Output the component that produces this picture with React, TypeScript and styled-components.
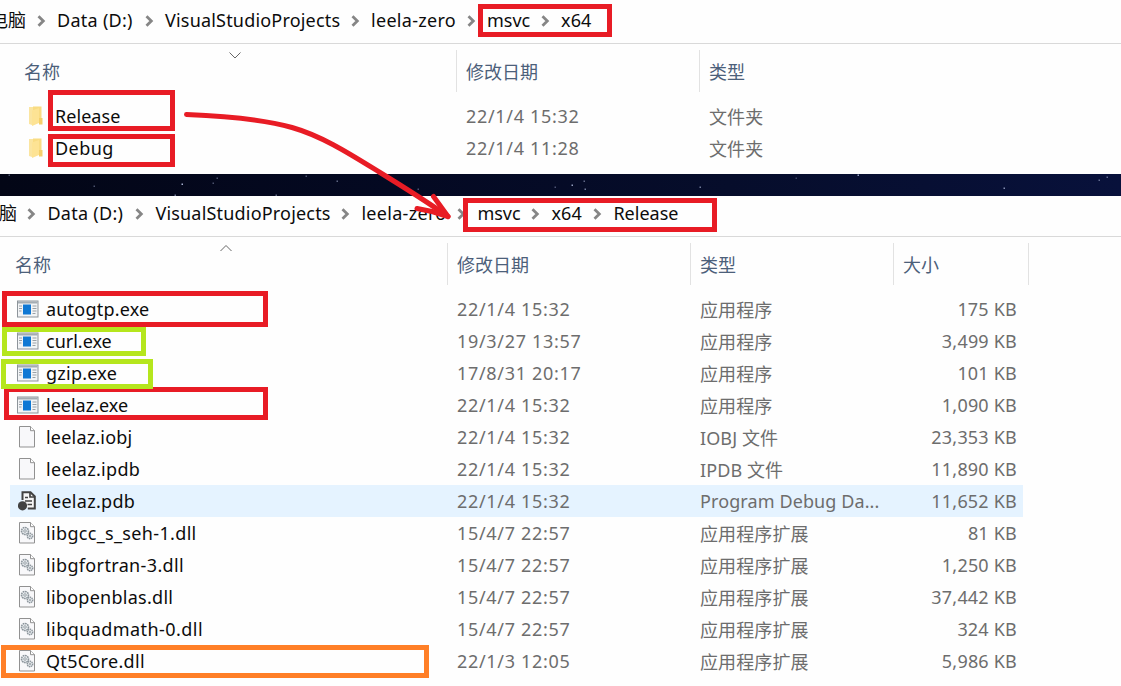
import React from "react";
import styled, { createGlobalStyle } from "styled-components";

const GlobalStyle = createGlobalStyle`
  * { box-sizing: border-box; }
  body {
    margin: 0;
    background: #fff;
    font-family: "Noto Sans", "Noto Sans CJK SC", sans-serif;
    font-size: 18px;
    overflow: hidden;
  }
`;

const Page = styled.main`
  position: relative;
  width: 1121px;
  height: 686px;
  overflow: hidden;
  background: #fefefe;
`;

const Explorer = styled.section<{ $height: number }>`
  display: flex;
  flex-direction: column;
  height: ${(p) => p.$height}px;
  overflow: hidden;
`;

const AddressBar = styled.nav<{ $height: number; $shift: number }>`
  display: flex;
  flex: none;
  align-items: flex-end;
  height: ${(p) => p.$height}px;
  border-bottom: 1px solid #d9d9d9;
  padding-bottom: 8px;
  & > :first-child {
    margin-left: ${(p) => p.$shift}px;
  }
`;

const Crumb = styled.span<{ $width: number; $spacing?: number }>`
  flex: none;
  width: ${(p) => p.$width}px;
  height: 30px;
  line-height: 30px;
  white-space: nowrap;
  color: #0c0c0c;
  letter-spacing: ${(p) => p.$spacing ?? 0}px;
`;

const Separator = styled.span`
  display: flex;
  flex: none;
  align-items: center;
  justify-content: center;
  width: 31px;
  height: 30px;
  padding-top: 1px;
`;

const HeaderRow = styled.div<{ $left: number }>`
  display: flex;
  flex: none;
  height: 56px;
  padding: 6px 0 8px ${(p) => p.$left}px;
`;

const HeaderCell = styled.div<{ $width: number; $last?: boolean }>`
  position: relative;
  flex: none;
  width: ${(p) => p.$width}px;
  height: 42px;
  padding-left: 9px;
  line-height: 44px;
  color: #4c607a;
  border-right: ${(p) => (p.$last ? "0" : "1px solid #e2e2e2")};
`;

const SortMark = styled.span`
  position: absolute;
  top: 0;
  left: 213px;
  display: flex;
`;

const Row = styled.div<{ $left: number; $selected?: boolean }>`
  display: flex;
  flex: none;
  align-items: center;
  width: 1013px;
  height: 32px;
  margin-left: ${(p) => p.$left}px;
  background: ${(p) => (p.$selected ? "#e5f3ff" : "transparent")};
`;

const NameCell = styled.div<{ $spacing?: number }>`
  display: flex;
  align-items: center;
  flex: none;
  width: 447px;
  padding-left: 7px;
  color: #0c0c0c;
  white-space: nowrap;
  letter-spacing: ${(p) => p.$spacing ?? 0}px;
`;

const IconSlot = styled.span<{ $inset: number }>`
  display: flex;
  flex: none;
  width: 29px;
  padding-left: ${(p) => p.$inset}px;
`;

const DateCell = styled.div`
  flex: none;
  width: 243px;
  color: #6d6d6d;
  letter-spacing: 0.69px;
`;

const TypeCell = styled.div`
  flex: none;
  width: 200px;
  padding-bottom: 1px;
  color: #6d6d6d;
  white-space: nowrap;
  letter-spacing: 0.1px;
`;

const SizeCell = styled.div`
  flex: none;
  width: 117px;
  color: #6d6d6d;
  text-align: right;
  letter-spacing: 0.2px;
`;

const Desktop = styled.div`
  height: 22px;
  background: linear-gradient(90deg, #030616 0%, #040922 35%, #060d2b 65%, #08113b 100%);
`;

const Annotations = styled.svg`
  position: absolute;
  inset: 0;
  pointer-events: none;
`;

const Mark = styled.div<{ $x: number; $y: number; $w: number; $h: number; $color: string }>`
  position: absolute;
  left: ${(p) => p.$x}px;
  top: ${(p) => p.$y}px;
  width: ${(p) => p.$w}px;
  height: ${(p) => p.$h}px;
  border: 5px solid ${(p) => p.$color};
`;

const Chevron = () => (
  <Separator>
    <svg width="9" height="12" viewBox="0 0 9 12">
      <path d="M1.5 1.3 6.3 6 1.5 10.7" fill="none" stroke="#868686" strokeWidth="2.8" />
    </svg>
  </Separator>
);

const FolderIcon = () => (
  <svg width="16" height="22" viewBox="0 0 16 22">
    <path d="M1 2h5v15l-2 3-3-1z" fill="#fbe5a0" />
    <path d="M5 1.500h8.500V14H5z" fill="#f9dc83" />
    <path d="M4 5.500 11 3v15l-7 3z" fill="#fde394" />
    <path d="M11 13h3.500v6.500H11z" fill="#f5d06b" />
  </svg>
);

const ExeIcon = () => (
  <svg width="22" height="18" viewBox="0 0 22 18">
    <rect x=".5" y="1" width="20.5" height="16" fill="#f2f4f6" stroke="#8d949a" />
    <path d="M1 2.5h19.5" stroke="#a4acb3" strokeWidth="2" />
    <path d="M2 6h3M2 8.5h3M2 11h2.500M15.500 6h4M15.500 8.500h4M15.500 11h4M15.500 13.500h3" stroke="#9aa0a6" />
    <rect x="6" y="4.500" width="8" height="10" fill="#0f78d4" />
  </svg>
);

const PageShape = () => (
  <>
    <path d="M1.500.5h11l4 4v16.500h-15z" fill="#f8f8fa" stroke="#919191" />
    <path d="M12.500.5v4.200h4" fill="#fff" stroke="#919191" />
  </>
);

const FileIcon = () => (
  <svg width="18" height="22" viewBox="0 0 18 22">
    <PageShape />
  </svg>
);

const DllIcon = () => (
  <svg width="18" height="22" viewBox="0 0 18 22">
    <PageShape />
    <g fill="#e9edf0" stroke="#8b949b">
      <circle cx="7" cy="9" r="3.500" strokeWidth="1.600" strokeDasharray="1.700 .6" />
      <circle cx="7" cy="9" r="1.300" strokeWidth=".8" />
      <circle cx="12" cy="14" r="2.700" strokeWidth="1.500" strokeDasharray="1.400 .6" />
      <circle cx="12" cy="14" r=".8" strokeWidth=".8" />
    </g>
  </svg>
);

const PdbIcon = () => (
  <svg width="19" height="20" viewBox="0 0 19 20">
    <path d="M4.500 9V1.200h8l4.300 4.300v12h-7" fill="#f6f6f6" stroke="#424242" strokeWidth="2" />
    <path d="M12 1v5h5M7 6.500h3M7 10h7M9.500 13.500H14" fill="none" stroke="#424242" strokeWidth="1.700" />
    <circle cx="4.500" cy="14.800" r="4.600" fill="#424242" />
  </svg>
);

const icons = {
  folder: { Icon: FolderIcon, inset: 2 },
  exe: { Icon: ExeIcon, inset: 0 },
  file: { Icon: FileIcon, inset: 1 },
  dll: { Icon: DllIcon, inset: 1 },
  pdb: { Icon: PdbIcon, inset: 0.5 },
};

type Entry = {
  icon: keyof typeof icons;
  name: string;
  date: string;
  type: string;
  size?: string;
  spacing?: number;
  selected?: boolean;
};

const folders: Entry[] = [
  { icon: "folder", name: "Release", date: "22/1/4 15:32", type: "文件夹", spacing: 0.05 },
  { icon: "folder", name: "Debug", date: "22/1/4 11:28", type: "文件夹", spacing: 0.45 },
];

const files: Entry[] = [
  { icon: "exe", name: "autogtp.exe", spacing: 0.2, date: "22/1/4 15:32", type: "应用程序", size: "175 KB" },
  { icon: "exe", name: "curl.exe", date: "19/3/27 13:57", type: "应用程序", size: "3,499 KB" },
  { icon: "exe", name: "gzip.exe", spacing: 0.25, date: "17/8/31 20:17", type: "应用程序", size: "101 KB" },
  { icon: "exe", name: "leelaz.exe", date: "22/1/4 15:32", type: "应用程序", size: "1,090 KB" },
  { icon: "file", name: "leelaz.iobj", spacing: 0.2, date: "22/1/4 15:32", type: "IOBJ 文件", size: "23,353 KB" },
  { icon: "file", name: "leelaz.ipdb", spacing: 0.3, date: "22/1/4 15:32", type: "IPDB 文件", size: "11,890 KB" },
  { icon: "pdb", name: "leelaz.pdb", spacing: 0.3, date: "22/1/4 15:32", type: "Program Debug Da...", size: "11,652 KB", selected: true },
  { icon: "dll", name: "libgcc_s_seh-1.dll", spacing: 0.34, date: "15/4/7 22:57", type: "应用程序扩展", size: "81 KB" },
  { icon: "dll", name: "libgfortran-3.dll", spacing: 0.35, date: "15/4/7 22:57", type: "应用程序扩展", size: "1,250 KB" },
  { icon: "dll", name: "libopenblas.dll", spacing: 0.27, date: "15/4/7 22:57", type: "应用程序扩展", size: "37,442 KB" },
  { icon: "dll", name: "libquadmath-0.dll", spacing: 0.44, date: "15/4/7 22:57", type: "应用程序扩展", size: "324 KB" },
  { icon: "dll", name: "Qt5Core.dll", spacing: 0.3, date: "22/1/3 12:05", type: "应用程序扩展", size: "5,986 KB" },
];

const crumbs = [
  { text: "Data (D:)", width: 77, spacing: 0.28 },
  { text: "VisualStudioProjects", width: 175, spacing: 0.19 },
  { text: "leela-zero", width: 85, spacing: 0.3 },
  { text: "msvc", width: 43, spacing: 0 },
  { text: "x64", width: 31, spacing: 0.15 },
  { text: "Release", width: 66, spacing: 0 },
];

type AddressProps = { height: number; shift: number; root: string; rootWidth: number; count: number };

const Address = ({ height, shift, root, rootWidth, count }: AddressProps) => (
  <AddressBar $height={height} $shift={shift}>
    <Crumb $width={rootWidth}>{root}</Crumb>
    {crumbs.slice(0, count).map((c) => (
      <React.Fragment key={c.text}>
        <Chevron />
        <Crumb $width={c.width} $spacing={c.spacing}>{c.text}</Crumb>
      </React.Fragment>
    ))}
  </AddressBar>
);

const FileRow = ({ entry, left }: { entry: Entry; left: number }) => {
  const { Icon, inset } = icons[entry.icon];
  return (
    <Row $left={left} $selected={entry.selected}>
      <NameCell $spacing={entry.spacing}>
        <IconSlot $inset={inset}>
          <Icon />
        </IconSlot>
        {entry.name}
      </NameCell>
      <DateCell>{entry.date}</DateCell>
      <TypeCell>{entry.type}</TypeCell>
      <SizeCell>{entry.size}</SizeCell>
    </Row>
  );
};

const SortArrow = ({ up }: { up?: boolean }) => (
  <SortMark>
    <svg width="14" height="10" viewBox="0 0 14 10">
      <path d={up ? "M1.500 8 7 2.500 12.500 8" : "M1.500 2.500 7 8 12.500 2.500"} fill="none" stroke="#666" />
    </svg>
  </SortMark>
);

const stars = [
  [9, 175, 0.4], [94, 186, 0.4], [182, 184, 0.9], [175, 195, 0.6], [213, 183, 0.4], [217, 178, 0.4],
  [276, 195, 0.5], [306, 176, 0.4], [337, 181, 0.5], [418, 189, 0.4], [555, 187, 0.4], [572, 185, 0.8],
  [584, 181, 0.5], [585, 189, 0.6], [700, 187, 0.6], [796, 178, 0.3], [858, 175, 0.8], [1004, 188, 0.7],
  [1099, 180, 0.5], [1107, 177, 0.5],
];

const RED = "#e81c25";
const GREEN = "#b5e61d";
const ORANGE = "#ff7f27";

export default function App() {
  return (
    <>
      <GlobalStyle />
      <Page>
        <Explorer $height={174}>
          <Address height={44} shift={-10} root="电脑" rootWidth={36} count={5} />
          <HeaderRow $left={15}>
            <HeaderCell $width={442}>名称<SortArrow /></HeaderCell>
            <HeaderCell $width={243}>修改日期</HeaderCell>
            <HeaderCell $width={203} $last>类型</HeaderCell>
          </HeaderRow>
          {folders.map((e) => (
            <FileRow key={e.name} entry={e} left={19} />
          ))}
        </Explorer>
        <Desktop />
        <Explorer $height={490}>
          <Address height={41} shift={-1} root="脑" rootWidth={17.4} count={6} />
          <HeaderRow $left={6}>
            <HeaderCell $width={442}>名称<SortArrow up /></HeaderCell>
            <HeaderCell $width={243}>修改日期</HeaderCell>
            <HeaderCell $width={203}>类型</HeaderCell>
            <HeaderCell $width={135}>大小</HeaderCell>
          </HeaderRow>
          {files.map((e) => (
            <FileRow key={e.name} entry={e} left={10} />
          ))}
        </Explorer>

        <Mark $x={478} $y={4} $w={134} $h={33} $color={RED} />
        <Mark $x={48} $y={90} $w={127} $h={41} $color={RED} />
        <Mark $x={48} $y={134} $w={127} $h={33} $color={RED} />
        <Mark $x={463} $y={198} $w={254} $h={34} $color={RED} />
        <Mark $x={2} $y={291} $w={266} $h={36} $color={RED} />
        <Mark $x={4} $y={387} $w={264} $h={33} $color={RED} />
        <Mark $x={2} $y={327} $w={144} $h={29} $color={GREEN} />
        <Mark $x={1} $y={359} $w={152} $h={30} $color={GREEN} />
        <Mark $x={1} $y={645} $w={428} $h={33} $color={ORANGE} />
        <Annotations width="1121" height="686" viewBox="0 0 1121 686">
          {stars.map(([x, y, o]) => (
            <rect key={`${x}-${y}`} x={x - 0.5} y={y - 0.5} width="1.500" height="1.500" fill="#b9c4e6" opacity={o} />
          ))}
          <g fill="none" stroke={RED} strokeWidth="5" strokeLinecap="round" strokeLinejoin="round">
            <path d="M186.500 114.500C225 116 262 119 292 127.500S350 154 380 172.500S426 201 448 216.500" />
            <path d="M433.500 196.500 448 216.500M417 208.500 432 211.500 448 216.500" />
          </g>
        </Annotations>
      </Page>
    </>
  );
}
